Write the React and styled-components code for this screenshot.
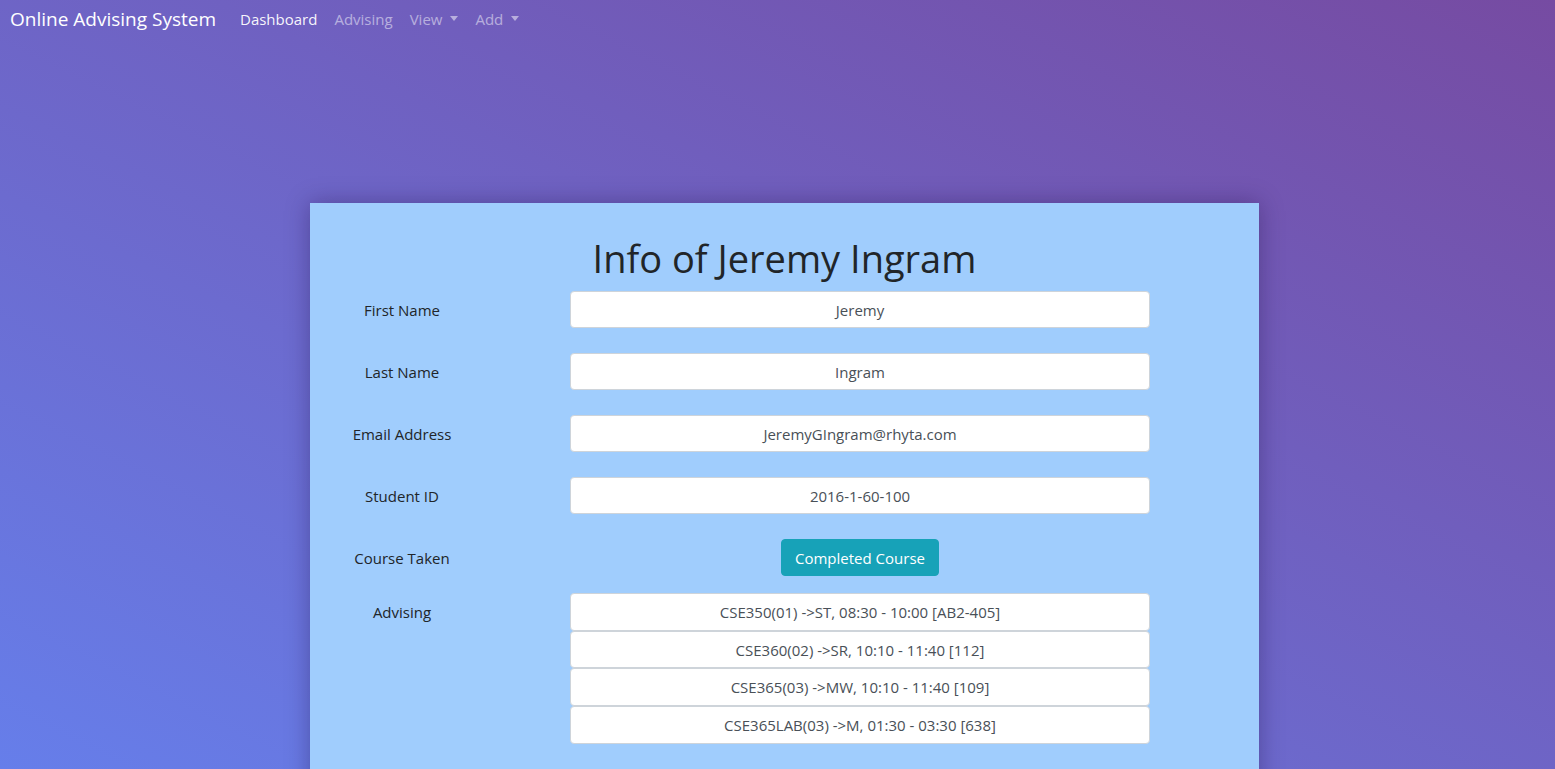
import React from "react";
import styled, { createGlobalStyle } from "styled-components";

const Global = createGlobalStyle`
  html, body { margin: 0; padding: 0; }
  body {
    font-family: "Segoe UI", "Open Sans", "Noto Sans", sans-serif;
    min-height: 100vh;
    background: linear-gradient(to top right, #667eea 0%, #764ba2 100%);
    background-attachment: fixed;
    overflow: hidden;
  }
  #root { min-height: 100vh; }
`;

const Page = styled.div`
  min-height: 100vh;
  display: flex;
  flex-direction: column;
`;

const NavBar = styled.nav`
  display: flex;
  align-items: center;
  height: 38px;
  padding: 0 10px;
  gap: 24px;
`;

const Brand = styled.a`
  color: #fff;
  font-size: 19px;
  line-height: 30px;
  text-decoration: none;
  white-space: nowrap;
`;

const NavList = styled.ul`
  display: flex;
  list-style: none;
  margin: 0;
  padding: 0;
  gap: 17px;
`;

const NavLink = styled.a`
  color: ${(p) => (p.$active ? "rgba(255,255,255,0.95)" : "rgba(255,255,255,0.5)")};
  font-size: 15px;
  line-height: 24px;
  text-decoration: none;
  white-space: nowrap;
  ${(p) =>
    p.$dropdown &&
    `
    &::after {
      content: "";
      display: inline-block;
      margin-left: 8px;
      vertical-align: 4px;
      border-top: 5px solid;
      border-right: 4.5px solid transparent;
      border-left: 4.5px solid transparent;
    }
  `}
`;

const Card = styled.section`
  margin: 165px 0 0 310px;
  width: 949px;
  background: #a0cdfd;
  box-shadow: 0 0 22px rgba(30, 10, 60, 0.35);
  padding: 31px 0 60px;
  box-sizing: border-box;
`;

const Title = styled.h1`
  margin: 0 0 9px;
  text-align: center;
  font-size: 38px;
  font-weight: 400;
  line-height: 48px;
  color: #212529;
`;

const Row = styled.div`
  display: grid;
  grid-template-columns: 140px 580px;
  column-gap: 98px;
  padding-left: 22px;
  align-items: ${(p) => (p.$top ? "start" : "center")};
  margin-bottom: ${(p) => p.$mb ?? 24}px;
`;

const Label = styled.div`
  text-align: center;
  font-size: 15px;
  line-height: 24px;
  color: #212529;
  white-space: nowrap;
  ${(p) => p.$top && "padding-top: 7px;"}
`;

const Field = styled.div`
  height: 37px;
  box-sizing: border-box;
  background: #fff;
  border: 1px solid #ced4da;
  border-radius: 4px;
  display: flex;
  align-items: center;
  justify-content: center;
  font-size: 15px;
  color: #495057;
  white-space: nowrap;
`;

const ButtonCell = styled.div`
  display: flex;
  justify-content: center;
`;

const InfoButton = styled.button`
  font-family: inherit;
  font-size: 15px;
  line-height: 24px;
  padding: 0 12px;
  height: 37px;
  width: 158px;
  white-space: nowrap;
  color: #fff;
  background: #17a2b8;
  border: 1px solid #17a2b8;
  border-radius: 4px;
  cursor: pointer;
`;

const List = styled.div`
  display: flex;
  flex-direction: column;
`;

const ListItem = styled(Field)`
  height: 37.7px;
`;

const fields = [
  ["First Name", "Jeremy"],
  ["Last Name", "Ingram"],
  ["Email Address", "JeremyGIngram@rhyta.com"],
  ["Student ID", "2016-1-60-100"],
];

const courses = [
  "CSE350(01) ->ST, 08:30 - 10:00 [AB2-405]",
  "CSE360(02) ->SR, 10:10 - 11:40 [112]",
  "CSE365(03) ->MW, 10:10 - 11:40 [109]",
  "CSE365LAB(03) ->M, 01:30 - 03:30 [638]",
];

export default function App() {
  return (
    <Page>
      <Global />
      <NavBar>
        <Brand href="#">Online Advising System</Brand>
        <NavList>
          <li><NavLink $active href="#">Dashboard</NavLink></li>
          <li><NavLink href="#">Advising</NavLink></li>
          <li><NavLink $dropdown href="#">View</NavLink></li>
          <li><NavLink $dropdown href="#">Add</NavLink></li>
        </NavList>
      </NavBar>
      <Card>
        <Title>Info of Jeremy Ingram</Title>
        {fields.map(([label, value]) => (
          <Row key={label} $mb={25}>
            <Label>{label}</Label>
            <Field>{value}</Field>
          </Row>
        ))}
        <Row $mb={17}>
          <Label>Course Taken</Label>
          <ButtonCell>
            <InfoButton>Completed Course</InfoButton>
          </ButtonCell>
        </Row>
        <Row $top $mb={0}>
          <Label $top>Advising</Label>
          <List>
            {courses.map((c) => (
              <ListItem key={c}>{c}</ListItem>
            ))}
          </List>
        </Row>
      </Card>
    </Page>
  );
}
